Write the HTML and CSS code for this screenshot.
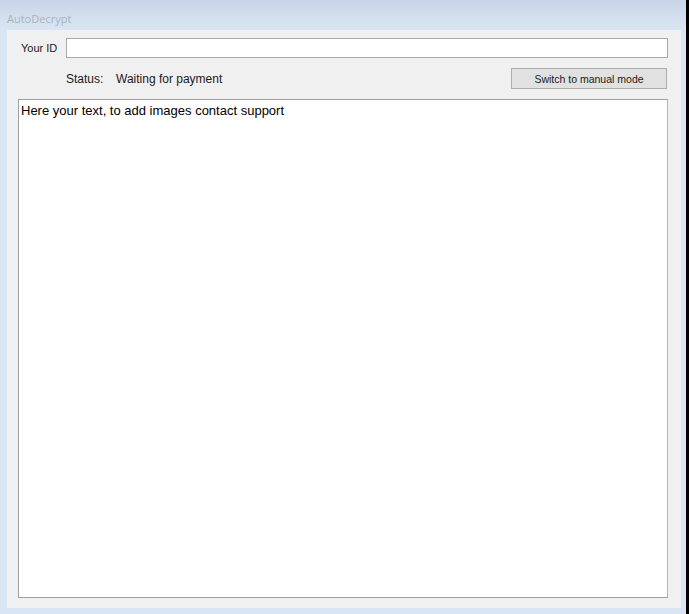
FILE: index.html
```html
<!DOCTYPE html>
<html lang="en">
<head>
<meta charset="UTF-8">
<meta name="viewport" content="width=device-width, initial-scale=1.0">
<title>AutoDecrypt</title>
<link rel="stylesheet" href="styles.css">
</head>
<body>
<div class="window">
    <div class="titlebar">AutoDecrypt</div>
    <div class="frame">
        <div class="client">
            <div class="row row-id">
                <label class="label" for="yourId">Your ID</label>
                <input class="textbox" id="yourId" type="text">
            </div>
            <div class="row row-status">
                <span class="status-label">Status:</span>
                <span class="status-value">Waiting for payment</span>
                <button class="button">Switch to manual mode</button>
            </div>
            <div class="message">Here your text, to add images contact support</div>
        </div>
        <div class="edge"></div>
    </div>
</div>
</body>
</html>
```

FILE: styles.css
```css
body {
    margin: 0;
    padding: 0;
    width: 689px;
    height: 614px;
    overflow: hidden;
    background-color: #000;
    font-family: 'Liberation Sans', Arial, sans-serif;
    font-size: 11px;
    color: #000;
}
.window {
    width: 686px;
    height: 614px;
    display: flex;
    flex-direction: column;
    background-color: #d9e5f3;
}
.titlebar {
    height: 30px;
    box-sizing: border-box;
    padding: 11px 0 0 7px;
    font-family: 'Open Sans', 'Noto Sans', sans-serif;
    font-size: 11px;
    color: #a9b2bc;
    background: linear-gradient(#c6d5e7, #d4e0ef 60%, #d9e5f3);
}
.frame {
    flex: 1;
    display: flex;
    padding: 0 0 6px 7px;
}
.client {
    width: 674px;
    display: flex;
    flex-direction: column;
    background-color: #f0f0f0;
    box-sizing: border-box;
    padding: 8px 13px 10px 11px;
}
.edge {
    flex: 1;
}
.row {
    display: flex;
    align-items: center;
}
.row-id {
    height: 20px;
}
.label {
    width: 48px;
    box-sizing: border-box;
    padding-left: 3px;
    color: #1a1a1a;
}
.textbox {
    flex: 1;
    height: 20px;
    box-sizing: border-box;
    margin: 0;
    border: 1px solid #a8a8a8;
    background-color: #fff;
    font: inherit;
}
.row-status {
    height: 21px;
    margin-top: 10px;
    padding-left: 48px;
    font-size: 12px;
    color: #1a1a1a;
}
.status-label {
    width: 50px;
}
.status-value {
    flex: 1;
}
.button {
    width: 156px;
    height: 21px;
    margin: 0 1px 0 0;
    padding: 0;
    font-family: inherit;
    font-size: 10.5px;
    color: #1a1a1a;
    background-color: #e1e1e1;
    border: 1px solid #adadad;
}
.message {
    flex: 1;
    margin-top: 10px;
    border: 1px solid #a0a0a0;
    border-right-color: #b4b4b4;
    background-color: #fff;
    padding: 3px 2px;
    font-size: 13px;
    line-height: 16px;
}
```
